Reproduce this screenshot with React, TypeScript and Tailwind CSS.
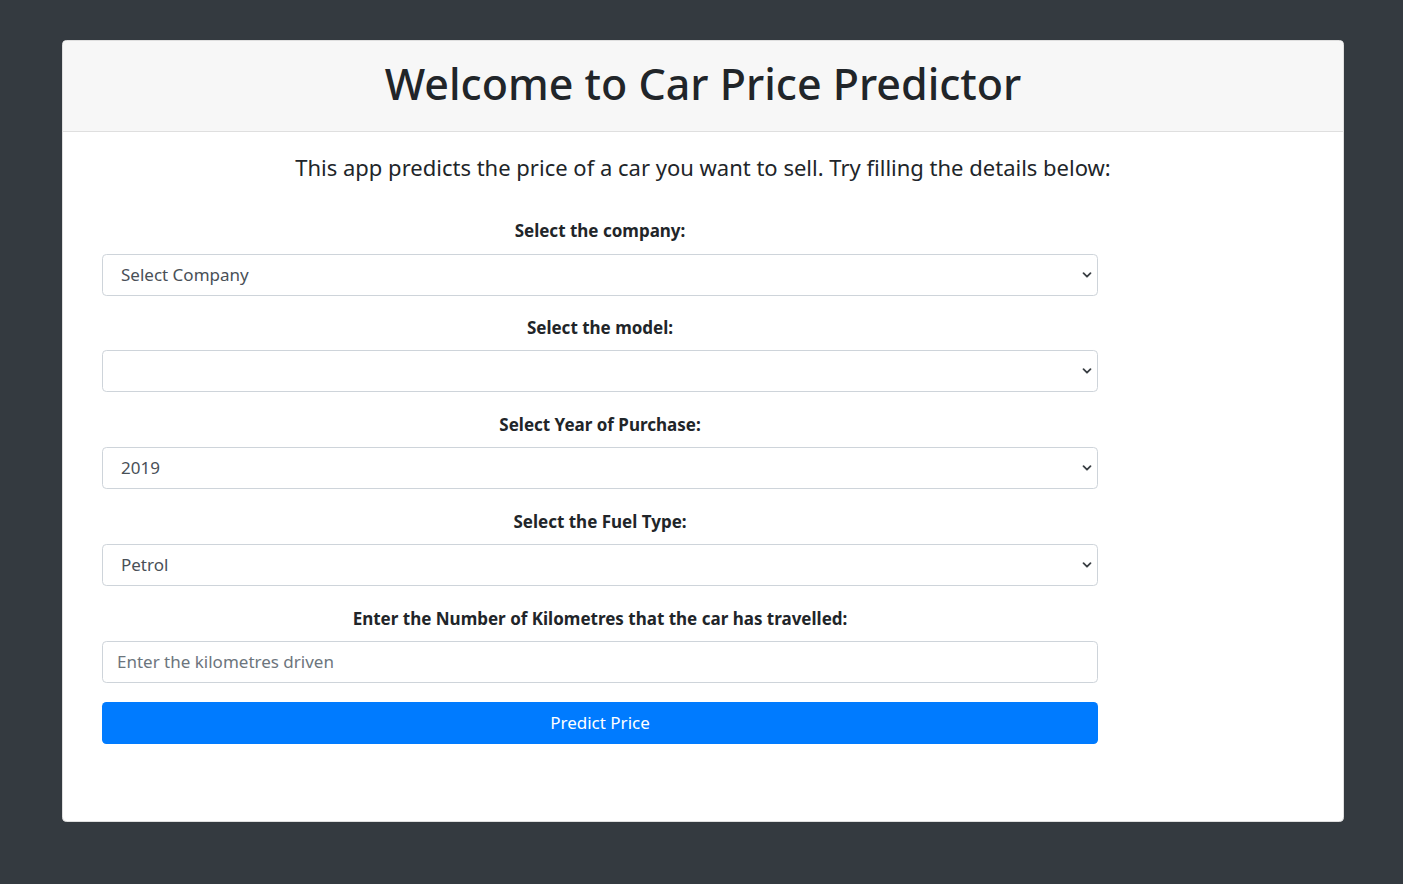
import React from "react";

const font = { fontFamily: '"Noto Sans", "Open Sans", sans-serif' };

function Chevron() {
  return (
    <svg
      className="pointer-events-none absolute right-[6px] top-1/2 -translate-y-1/2"
      width="10"
      height="10"
      viewBox="0 0 10 10"
    >
      <path d="M1.5 3.2 L5 6.7 L8.5 3.2" fill="none" stroke="#3a3f44" strokeWidth="1.8" strokeLinecap="round" strokeLinejoin="round" />
    </svg>
  );
}

function SelectField({ label, value }: { label: string; value: string }) {
  return (
    <div className="mb-[19.6px]">
      <label className="block text-center text-[17px] font-bold leading-[26.4px] text-[#212529] mb-[8.8px]">{label}</label>
      <div className="relative">
        <select
          className="block h-[42px] w-full appearance-none rounded-[4.4px] border border-[#ced4da] bg-white pl-[18px] pr-8 text-[17px] text-[#495057] outline-none"
          style={font}
          defaultValue={value}
        >
          <option value={value}>{value}</option>
        </select>
        <Chevron />
      </div>
    </div>
  );
}

export default function App() {
  return (
    <div className="min-h-[884px] bg-[#343a40] pt-[40px] pl-[62px]" style={font}>
      <div className="w-[1282px] h-[782px] overflow-hidden rounded-[4.4px] border border-[#dfdfdf] bg-white">
        <div className="h-[91px] border-b border-[#dfdfdf] bg-[#f7f7f7] pt-[17px] text-center">
          <h1 className="text-[43px] font-medium leading-[52.8px] text-[#212529]">Welcome to Car Price Predictor</h1>
        </div>
        <div className="px-[22px] pt-[22px]">
          <h5 className="text-center text-[22px] font-normal leading-[26.4px] text-[#212529]">
            This app predicts the price of a car you want to sell. Try filling the details below:
          </h5>
          <form className="ml-[17px] mt-[38px] w-[996px]">
            <SelectField label="Select the company:" value="Select Company" />
            <SelectField label="Select the model:" value="" />
            <SelectField label="Select Year of Purchase:" value="2019" />
            <SelectField label="Select the Fuel Type:" value="Petrol" />
            <div className="mb-[19px]">
              <label className="block text-center text-[17px] font-bold leading-[26.4px] text-[#212529] mb-[8.8px]">
                Enter the Number of Kilometres that the car has travelled:
              </label>
              <input
                className="block h-[42px] w-full rounded-[4.4px] border border-[#ced4da] bg-white px-[14px] text-[17px] text-[#495057] outline-none placeholder:text-[#6c757d]"
                style={font}
                placeholder="Enter the kilometres driven"
              />
            </div>
            <button
              type="button"
              className="block h-[42px] w-full rounded-[4.4px] bg-[#007bff] text-center text-[17px] text-white"
              style={font}
            >
              Predict Price
            </button>
          </form>
        </div>
      </div>
    </div>
  );
}
